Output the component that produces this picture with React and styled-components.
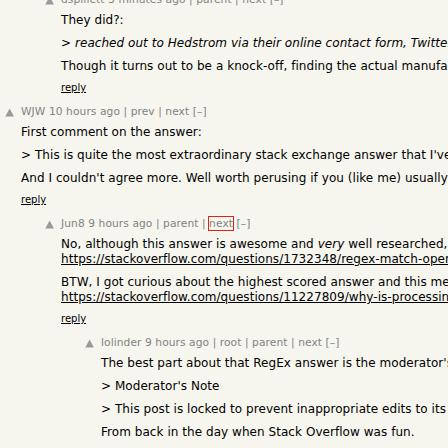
import React from "react";
import styled, { createGlobalStyle } from "styled-components";

const GlobalStyle = createGlobalStyle`
  html, body {
    margin: 0;
    padding: 0;
    background: #f6f6ef;
    overflow: hidden;
  }
  body {
    font-family: "DejaVu Sans", Verdana, sans-serif;
    color: #828282;
  }
`;

const Page = styled.div`
  width: 448px;
  height: 448px;
  overflow: hidden;
  background: #f6f6ef;
`;

const Thread = styled.div`
  display: flex;
  flex-direction: column;
  gap: 11px;
  margin-top: -7px;
`;

const Row = styled.div`
  display: flex;
  align-items: flex-start;
  padding-left: ${(p) => p.$depth * 40 + 4}px;
`;

const VoteCol = styled.div`
  flex: none;
  width: 17px;
  display: flex;
  justify-content: flex-start;
`;

const Arrow = styled.svg`
  display: block;
  width: 10px;
  height: 10px;
  margin-top: 3px;
  margin-left: 1px;
`;

const Content = styled.div`
  display: flex;
  flex-direction: column;
  min-width: 0;
`;

const Meta = styled.div`
  font-size: 10.67px;
  line-height: 13px;
  letter-spacing: 0.08px;
  color: #828282;
  white-space: nowrap;
`;

const MetaLink = styled.a`
  color: #828282;
  text-decoration: none;
  outline: ${(p) => (p.$boxed ? "1px solid #e0201a" : "none")};
  outline-offset: 0;
`;

const CommText = styled.div`
  margin-top: 7px;
  font-size: 12px;
  line-height: 15px;
  letter-spacing: 0.05px;
  color: #000;
`;

const Para = styled.p`
  margin: 0;
  white-space: nowrap;
  & + & {
    margin-top: 8px;
  }
`;

const TextLink = styled.a`
  color: #000;
  text-decoration: underline;
`;

const Reply = styled.div`
  margin-top: 7px;
  font-size: 10px;
  line-height: 13px;
  a {
    color: #000;
    text-decoration: underline;
  }
`;

const VoteArrow = () => (
  <Arrow viewBox="0 0 10 10" aria-hidden="true">
    <polygon points="0.3,8.6 4.6,0.4 8.9,8.6" fill="#9a9a9a" />
  </Arrow>
);

const Comment = ({ depth, user, age, navs, children }) => (
  <Row $depth={depth}>
    <VoteCol>
      <VoteArrow />
    </VoteCol>
    <Content>
      <Meta>
        <MetaLink href="#">{user}</MetaLink>{" "}
        <MetaLink href="#">{age}</MetaLink>
        {navs.map((n) => (
          <React.Fragment key={n.label}>
            {" | "}
            <MetaLink href="#" $boxed={n.boxed}>
              {n.label}
            </MetaLink>
          </React.Fragment>
        ))}{" "}
        <MetaLink href="#">[–]</MetaLink>
      </Meta>
      <CommText>{children}</CommText>
      <Reply>
        <a href="#">reply</a>
      </Reply>
    </Content>
  </Row>
);

export default function App() {
  return (
    <Page>
      <GlobalStyle />
      <Thread>
        <Comment
          depth={1}
          user="dspillett"
          age="3 minutes ago"
          navs={[{ label: "parent" }, { label: "next" }]}
        >
          <Para>They did?:</Para>
          <Para>
            &gt; <i>reached out to Hedstrom via their online contact form, Twitter, and email, but did not hear back</i>
          </Para>
          <Para>
            Though it turns out to be a knock-off, finding the actual manufacturer is harder than expected.
          </Para>
        </Comment>
        <Comment
          depth={0}
          user="WJW"
          age="10 hours ago"
          navs={[{ label: "prev" }, { label: "next" }]}
        >
          <Para>First comment on the answer:</Para>
          <Para>
            &gt; This is quite the most extraordinary stack exchange answer that I've ever seen.
          </Para>
          <Para>
            And I couldn't agree more. Well worth perusing if you (like me) usually skip the long ones.
          </Para>
        </Comment>
        <Comment
          depth={1}
          user="Jun8"
          age="9 hours ago"
          navs={[{ label: "parent" }, { label: "next", boxed: true }]}
        >
          <Para>
            No, although this answer is awesome and <i>very</i> well researched, the famous one is this:
            <br />
            <TextLink href="#">
              https://stackoverflow.com/questions/1732348/regex-match-open-tags-except-xhtml-self-contained-tags
            </TextLink>
          </Para>
          <Para>
            BTW, I got curious about the highest scored answer and this merits a look too:
            <br />
            <TextLink href="#">
              https://stackoverflow.com/questions/11227809/why-is-processing-a-sorted-array-faster-than-processing-an-unsorted-array
            </TextLink>
          </Para>
        </Comment>
        <Comment
          depth={2}
          user="lolinder"
          age="9 hours ago"
          navs={[{ label: "root" }, { label: "parent" }, { label: "next" }]}
        >
          <Para>The best part about that RegEx answer is the moderator's note:</Para>
          <Para>&gt; Moderator's Note</Para>
          <Para>&gt; This post is locked to prevent inappropriate edits to its content.</Para>
          <Para>From back in the day when Stack Overflow was fun.</Para>
        </Comment>
      </Thread>
    </Page>
  );
}
